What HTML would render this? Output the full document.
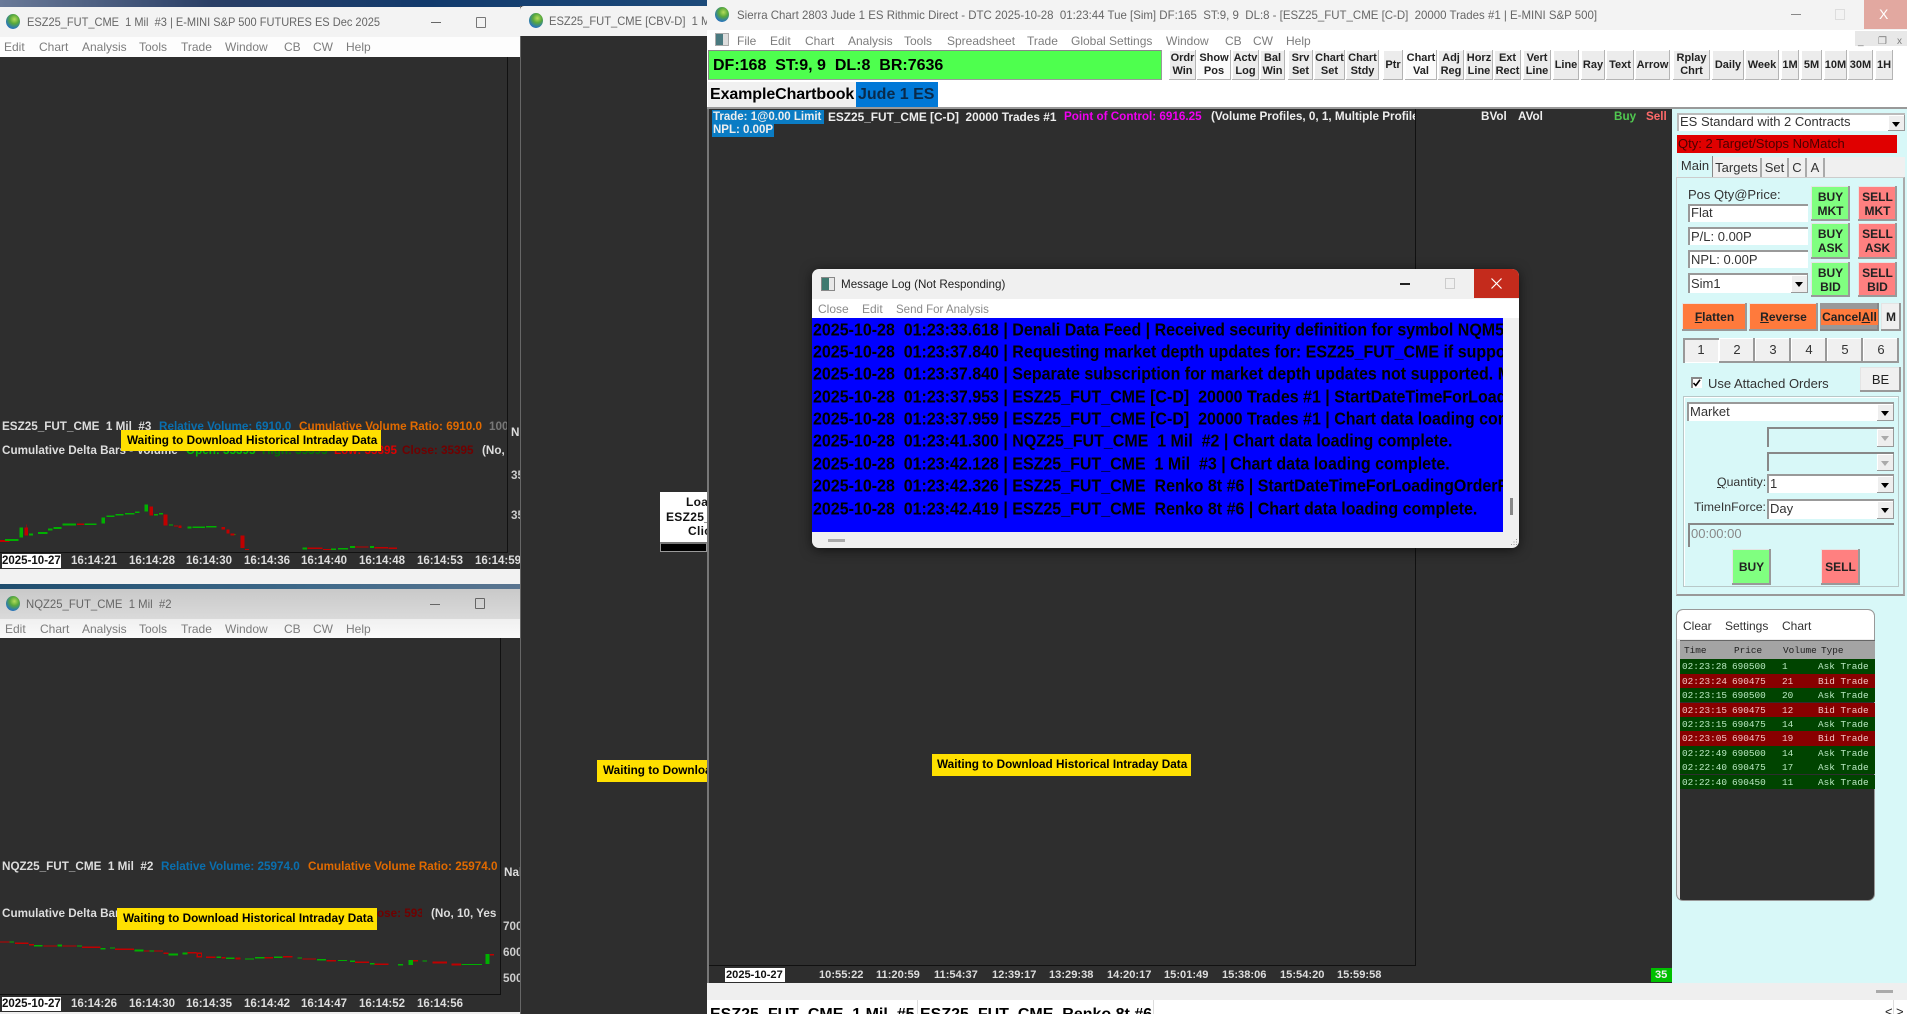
<!DOCTYPE html>
<html><head><meta charset="utf-8"><title>Sierra Chart</title>
<style>
html,body{margin:0;padding:0;width:1907px;height:1014px;overflow:hidden;background:#2e2e2e}
*{box-sizing:border-box}
body{font-family:"Liberation Sans",sans-serif;position:relative}
.a{position:absolute;white-space:pre}
.r{position:absolute}
.t{position:absolute;white-space:pre;line-height:14px;height:14px}
.m{font-size:12px;color:#7c7c7c}
.tt{font-size:12px;color:#666;transform-origin:left center}
.b{font-weight:bold;font-size:11.7px;color:#e8e8e8}
.y{font-weight:bold;font-size:11.75px;color:#000}
.tm{position:absolute;white-space:pre;font-weight:bold;font-size:11.5px;color:#ddd;line-height:14px}
.tm.n{font-size:11.1px}
.glob{position:absolute;width:14px;height:15px;border-radius:50%;background:radial-gradient(circle at 60% 35%,#b4dc5a 0,#58a83c 35%,#2a78b8 70%,#1a4a90 100%)}
.btn{position:absolute;top:50px;height:30px;background:#ececec;box-shadow:inset -1px -1px #b4b4b4,inset 1px 1px #fff;font-weight:bold;font-size:11px;line-height:13px;text-align:center;color:#222;display:flex;align-items:center;justify-content:center;white-space:pre}
.btn.on{background:#fbfbfb}
.log{position:absolute;left:813px;white-space:pre;font-weight:bold;font-size:16px;line-height:20px;color:#000;transform:scaleY(1.08)}
.p{position:absolute;white-space:pre;font-size:13px;line-height:15px;color:#333}
.in{position:absolute;background:#fff;border-top:2px solid #999;border-left:2px solid #999;font-size:13px;line-height:15px;color:#333;padding-left:1px;white-space:pre}
.dd{position:absolute;right:0;top:0;bottom:0;width:17px;background:#eee;box-shadow:inset -1px -1px #999,inset 1px 1px #fff}
.dd:after{content:"";position:absolute;left:4px;top:7px;border:4px solid transparent;border-top:5px solid #000;border-bottom:0}
.dd.off:after{border-top-color:#aaa}
.ob{position:absolute;box-shadow:inset -2px -2px #999,inset 1px 1px #e4e4e4;font-weight:bold;font-size:12px;line-height:14px;text-align:center;color:#222;display:flex;align-items:center;justify-content:center;white-space:pre}
.gb{background:#80ff80}.rb{background:#ff8080}.or{background:#ff7a3c}
.nb{position:absolute;top:338px;width:36px;height:25px;background:#f0f0f0;box-shadow:inset -2px -2px #999,inset 1px 1px #fff;text-align:center;font-size:13px;line-height:23px;color:#333}
.tab{position:absolute;top:158px;height:19px;font-size:13px;line-height:19px;text-align:center;color:#333;border-right:2px solid #aaa;background:#f0f0f0}
.row{position:absolute;left:1680px;width:195px;height:14.4px;font-family:"Liberation Mono",monospace;font-size:9.4px;line-height:15px;white-space:pre}
.row span{position:absolute;top:0}
.g{background:#004400;color:#b8e8c0}.d{background:#880000;color:#f4c0c0}
.s1{left:2px}.s2{left:52px}.s3{left:102px}.s4{left:138px}
</style></head><body>

<!-- wallpaper -->
<div class="r" style="left:0;top:0;width:708px;height:8px;background:linear-gradient(90deg,#6a7a98 0,#2a3f66 30%,#123a6c 60%,#1c4a7a 100%)"></div>

<!-- Left window 1 -->
<div class="r" style="left:0;top:7px;width:520px;height:30px;background:#f3f3f3"></div>
<div class="glob" style="left:6px;top:14px"></div>
<div class="t tt" style="left:27px;top:15px;transform:scaleX(.92)">ESZ25_FUT_CME  1 Mil  #3 | E-MINI S&amp;P 500 FUTURES ES Dec 2025</div>
<div class="r" style="left:431px;top:22px;width:10px;height:1px;background:#666"></div>
<div class="r" style="left:476px;top:17px;width:10px;height:11px;border:1px solid #777;border-radius:1px"></div>
<div class="r" style="left:0;top:37px;width:520px;height:20px;background:#fdfdfd"></div>
<div class="t m" style="left:4px;top:40px">Edit</div><div class="t m" style="left:39px;top:40px">Chart</div><div class="t m" style="left:82px;top:40px">Analysis</div><div class="t m" style="left:139px;top:40px">Tools</div><div class="t m" style="left:181px;top:40px">Trade</div><div class="t m" style="left:225px;top:40px">Window</div><div class="t m" style="left:284px;top:40px">CB</div><div class="t m" style="left:313px;top:40px">CW</div><div class="t m" style="left:346px;top:40px">Help</div>
<div class="r" style="left:0;top:57px;width:520px;height:512px;background:#2e2e2e"></div>
<div class="r" style="left:507px;top:57px;width:1px;height:495px;background:#111"></div>
<div class="r" style="left:0;top:552px;width:508px;height:1px;background:#111"></div>
<div class="t b" style="left:2px;top:420px;color:#ddd">ESZ25_FUT_CME  1 Mil  #3</div>
<div class="t b" style="left:159px;top:420px;color:#0a6fae">Relative Volume: 6910.0</div>
<div class="t b" style="left:299px;top:420px;color:#e06a00">Cumulative Volume Ratio: 6910.0</div>
<div class="t b" style="left:489px;top:420px;color:#777;width:18px;overflow:hidden">100</div>
<div class="t b" style="left:2px;top:444px;color:#ddd">Cumulative Delta Bars - Volume</div>
<div class="t b" style="left:186px;top:444px;color:#00c000">Open: 35395</div>
<div class="t b" style="left:262px;top:444px;color:#007a00">High: 35395</div>
<div class="t b" style="left:334px;top:444px;color:#e00000">Low: 35395</div>
<div class="t b" style="left:402px;top:444px;color:#700000">Close: 35395</div>
<div class="t b" style="left:482px;top:444px;color:#ddd;width:25px;overflow:hidden">(No,</div>
<div class="t b" style="left:511px;top:426px;color:#ddd;width:9px;overflow:hidden">N</div>
<div class="t b" style="left:511px;top:469px;color:#ccc;width:9px;overflow:hidden">35</div>
<div class="t b" style="left:511px;top:509px;color:#ccc;width:9px;overflow:hidden">35</div>

<svg class="r" style="left:0;top:0" width="520" height="1014" shape-rendering="crispEdges">
<g transform="translate(0,410) scale(.338,.3333)">
<g fill="#00b000">
<rect x="0" y="390" width="28" height="6" fill="#c00000"/><rect x="15" y="387" width="40" height="6"/><rect x="57" y="352" width="11" height="30"/><rect x="86" y="370" width="12" height="7"/><rect x="113" y="366" width="28" height="6"/><rect x="142" y="355" width="14" height="7"/><rect x="158" y="351" width="24" height="6"/><rect x="185" y="340" width="40" height="6"/><rect x="228" y="340" width="20" height="5" fill="#c00000"/><rect x="250" y="340" width="36" height="5"/><rect x="300" y="322" width="11" height="18"/><rect x="315" y="316" width="24" height="5"/><rect x="342" y="312" width="24" height="5"/><rect x="370" y="309" width="28" height="5"/><rect x="400" y="304" width="12" height="5"/><rect x="427" y="284" width="11" height="20"/><rect x="456" y="312" width="12" height="5"/><rect x="470" y="309" width="12" height="5"/><rect x="500" y="343" width="12" height="4"/><rect x="555" y="350" width="12" height="5"/><rect x="570" y="350" width="36" height="4"/><rect x="610" y="348" width="30" height="4"/><rect x="685" y="372" width="12" height="3"/><rect x="895" y="412" width="14" height="7"/><rect x="980" y="415" width="14" height="5"/><rect x="1000" y="414" width="30" height="4"/><rect x="1036" y="408" width="14" height="6"/><rect x="1094" y="408" width="12" height="6"/>
</g>
<g fill="#c00000">
<rect x="72" y="352" width="11" height="24"/><rect x="77" y="344" width="2" height="8"/><rect x="442" y="289" width="11" height="27"/><rect x="484" y="313" width="12" height="34"/><rect x="515" y="346" width="12" height="3"/><rect x="528" y="347" width="9" height="7"/><rect x="655" y="351" width="11" height="8"/><rect x="670" y="358" width="9" height="12"/><rect x="682" y="370" width="12" height="6"/><rect x="711" y="376" width="12" height="38"/><rect x="725" y="417" width="12" height="3"/><rect x="910" y="413" width="44" height="4"/><rect x="955" y="417" width="24" height="3"/><rect x="1050" y="409" width="40" height="4"/><rect x="1108" y="411" width="40" height="4"/><rect x="1150" y="413" width="24" height="4"/>
</g>
</g>
<g transform="translate(0,840) scale(.338,.3333)">
<g fill="#c00000">
<rect x="0" y="304" width="28" height="4"/><rect x="45" y="308" width="40" height="4"/><rect x="86" y="312" width="14" height="5"/><rect x="128" y="316" width="40" height="4"/><rect x="185" y="316" width="42" height="4"/><rect x="242" y="320" width="55" height="4"/><rect x="340" y="326" width="56" height="4"/><rect x="426" y="331" width="56" height="4"/><rect x="484" y="338" width="14" height="4"/><rect x="555" y="336" width="26" height="4"/><rect x="584" y="340" width="12" height="10" fill="none" stroke="#c00000" stroke-width="4"/><rect x="610" y="350" width="28" height="4"/><rect x="655" y="351" width="12" height="5"/><rect x="697" y="353" width="14" height="5"/><rect x="782" y="351" width="26" height="5"/><rect x="838" y="348" width="28" height="5"/><rect x="895" y="355" width="40" height="4"/><rect x="966" y="360" width="28" height="5"/><rect x="1050" y="365" width="42" height="4"/><rect x="1108" y="371" width="42" height="4"/><rect x="1222" y="360" width="14" height="5"/><rect x="1280" y="365" width="42" height="5"/><rect x="1336" y="371" width="28" height="5"/><rect x="1450" y="342" width="12" height="5"/>
</g>
<g fill="#00b000">
<rect x="28" y="304" width="14" height="4"/><rect x="100" y="315" width="26" height="5"/><rect x="170" y="314" width="14" height="5"/><rect x="228" y="316" width="14" height="4"/><rect x="298" y="324" width="14" height="5"/><rect x="326" y="322" width="14" height="4"/><rect x="398" y="329" width="26" height="5"/><rect x="442" y="331" width="14" height="4"/><rect x="498" y="341" width="28" height="5"/><rect x="540" y="337" width="14" height="7"/><rect x="640" y="350" width="14" height="4"/><rect x="668" y="353" width="26" height="4"/><rect x="725" y="355" width="26" height="4"/><rect x="754" y="351" width="28" height="4"/><rect x="810" y="349" width="26" height="5"/><rect x="880" y="352" width="14" height="4"/><rect x="938" y="357" width="26" height="4"/><rect x="1000" y="360" width="26" height="3"/><rect x="1036" y="362" width="14" height="4"/><rect x="1094" y="369" width="14" height="4"/><rect x="1178" y="372" width="14" height="5"/><rect x="1208" y="360" width="14" height="15"/><rect x="1250" y="362" width="14" height="3"/><rect x="1366" y="372" width="60" height="3"/><rect x="1436" y="342" width="12" height="30"/>
</g>
</g>
</svg>

<div class="r" style="left:121px;top:430px;width:260px;height:21px;background:#ffe000"></div>
<div class="t y" style="left:127px;top:434px">Waiting to Download Historical Intraday Data</div>
<div class="r" style="left:2px;top:554px;width:59px;height:14px;background:#fff"></div>
<div class="tm" style="left:2px;top:554px;color:#111">2025-10-27</div>
<div class="tm" style="left:71px;top:554px">16:14:21</div><div class="tm" style="left:129px;top:554px">16:14:28</div><div class="tm" style="left:186px;top:554px">16:14:30</div><div class="tm" style="left:244px;top:554px">16:14:36</div><div class="tm" style="left:301px;top:554px">16:14:40</div><div class="tm" style="left:359px;top:554px">16:14:48</div><div class="tm" style="left:417px;top:554px">16:14:53</div><div class="tm" style="left:475px;top:554px">16:14:59</div>

<!-- strip between windows -->
<div class="r" style="left:0;top:569px;width:520px;height:15px;background:#f2f2f2"></div>
<div class="r" style="left:0;top:584px;width:520px;height:5px;background:linear-gradient(90deg,#1f4d6e,#3f6a8a 60%,#5a7590)"></div>

<!-- Left window 3 -->
<div class="r" style="left:0;top:589px;width:520px;height:30px;background:linear-gradient(#c9c9c9,#dadada)"></div>
<div class="glob" style="left:6px;top:596px"></div>
<div class="t tt" style="left:26px;top:597px;color:#666;transform:scaleX(.945)">NQZ25_FUT_CME  1 Mil  #2</div>
<div class="r" style="left:430px;top:604px;width:10px;height:1px;background:#666"></div>
<div class="r" style="left:475px;top:598px;width:10px;height:11px;border:1px solid #666;border-radius:1px"></div>
<div class="r" style="left:0;top:619px;width:520px;height:19px;background:linear-gradient(#f0f0f0,#fafafa)"></div>
<div class="t m" style="left:5px;top:622px">Edit</div><div class="t m" style="left:40px;top:622px">Chart</div><div class="t m" style="left:82px;top:622px">Analysis</div><div class="t m" style="left:139px;top:622px">Tools</div><div class="t m" style="left:181px;top:622px">Trade</div><div class="t m" style="left:225px;top:622px">Window</div><div class="t m" style="left:284px;top:622px">CB</div><div class="t m" style="left:313px;top:622px">CW</div><div class="t m" style="left:346px;top:622px">Help</div>
<div class="r" style="left:500px;top:638px;width:1px;height:356px;background:#111"></div>
<div class="r" style="left:0;top:994px;width:501px;height:1px;background:#111"></div>
<div class="t b" style="left:2px;top:860px;color:#ddd">NQZ25_FUT_CME  1 Mil  #2</div>
<div class="t b" style="left:161px;top:860px;color:#0a6fae">Relative Volume: 25974.0</div>
<div class="t b" style="left:308px;top:860px;color:#e06a00">Cumulative Volume Ratio: 25974.0</div>
<div class="t b" style="left:504px;top:866px;color:#ddd;width:16px;overflow:hidden">Nal</div>
<div class="t b" style="left:2px;top:907px;color:#ddd">Cumulative Delta Bars</div>
<div class="t b" style="left:377px;top:907px;color:#700000;width:45px;overflow:hidden">ose: 593</div>
<div class="t b" style="left:431px;top:907px;color:#ddd;width:68px;overflow:hidden">(No, 10, Yes</div>
<div class="t b" style="left:503px;top:920px;color:#ccc;width:17px;overflow:hidden">700</div>
<div class="t b" style="left:503px;top:946px;color:#ccc;width:17px;overflow:hidden">600</div>
<div class="t b" style="left:503px;top:972px;color:#ccc;width:17px;overflow:hidden">500</div>
<div class="r" style="left:117px;top:908px;width:260px;height:22px;background:#ffe000"></div>
<div class="t y" style="left:123px;top:912px">Waiting to Download Historical Intraday Data</div>
<div class="r" style="left:2px;top:997px;width:59px;height:14px;background:#fff"></div>
<div class="tm" style="left:2px;top:997px;color:#111">2025-10-27</div>
<div class="tm" style="left:71px;top:997px">16:14:26</div><div class="tm" style="left:129px;top:997px">16:14:30</div><div class="tm" style="left:186px;top:997px">16:14:35</div><div class="tm" style="left:244px;top:997px">16:14:42</div><div class="tm" style="left:301px;top:997px">16:14:47</div><div class="tm" style="left:359px;top:997px">16:14:52</div><div class="tm" style="left:417px;top:997px">16:14:56</div>
<div class="r" style="left:0;top:1012px;width:520px;height:2px;background:#eee"></div>

<!-- Middle window -->
<div class="r" style="left:520px;top:6px;width:188px;height:1008px;background:#2e2e2e;border-left:1px solid #666"></div>
<div class="r" style="left:520px;top:6px;width:188px;height:30px;background:#f3f3f3;border-radius:4px 0 0 0"></div>
<div class="glob" style="left:529px;top:13px"></div>
<div class="r" style="left:549px;top:14px;width:159px;height:14px;overflow:hidden"><div class="t tt" style="left:0;top:0;transform:scaleX(.93)">ESZ25_FUT_CME [CBV-D]  1 Mil</div></div>
<div class="r" style="left:660px;top:492px;width:47px;height:50px;background:#fff"></div>
<div class="r" style="left:660px;top:542px;width:47px;height:10px;background:#000;border:1px solid #999;border-top:2px solid #777"></div>
<div class="t" style="left:660px;top:495px;width:47px;overflow:hidden;font-weight:bold;font-size:12px;color:#111;letter-spacing:.3px"><span style="position:absolute;left:26px">Loa</span></div>
<div class="t" style="left:660px;top:510px;width:47px;overflow:hidden;font-weight:bold;font-size:12px;color:#111;letter-spacing:.3px"><span style="position:absolute;left:6px">ESZ25_</span></div>
<div class="t" style="left:660px;top:524px;width:47px;overflow:hidden;font-weight:bold;font-size:12px;color:#111;letter-spacing:.3px"><span style="position:absolute;left:28px">Clic</span></div>
<div class="r" style="left:597px;top:760px;width:110px;height:22px;background:#ffe000;overflow:hidden"></div>
<div class="t y" style="left:603px;top:764px;width:104px;overflow:hidden">Waiting to Download Historical</div>

<!-- Main window -->
<div class="r" style="left:707px;top:0;width:1200px;height:30px;background:#f3f3f3"></div>
<div class="glob" style="left:715px;top:7px"></div>
<div class="t tt" style="left:737px;top:8px;color:#666;transform:scaleX(.955)">Sierra Chart 2803 Jude 1 ES Rithmic Direct - DTC 2025-10-28  01:23:44 Tue [Sim] DF:165  ST:9, 9  DL:8 - [ESZ25_FUT_CME [C-D]  20000 Trades #1 | E-MINI S&amp;P 500]</div>
<div class="r" style="left:1791px;top:14px;width:10px;height:1px;background:#888"></div>
<div class="r" style="left:1835px;top:9px;width:10px;height:11px;border:1px solid #ddd"></div>
<div class="r" style="left:1864px;top:0;width:43px;height:29px;background:#e2a8a0"></div>
<div class="t" style="left:1879px;top:7px;color:#fff;font-size:14px">X</div>
<div class="r" style="left:707px;top:30px;width:1200px;height:20px;background:#fff"></div>
<div class="r" style="left:715px;top:33px;width:14px;height:13px;background:linear-gradient(90deg,#4a7a80 60%,#ddd 60%);border:1px solid #aaa"></div>
<div class="t m" style="left:737px;top:34px">File</div><div class="t m" style="left:770px;top:34px">Edit</div><div class="t m" style="left:805px;top:34px">Chart</div><div class="t m" style="left:848px;top:34px">Analysis</div><div class="t m" style="left:904px;top:34px">Tools</div><div class="t m" style="left:947px;top:34px">Spreadsheet</div><div class="t m" style="left:1027px;top:34px">Trade</div><div class="t m" style="left:1071px;top:34px">Global Settings</div><div class="t m" style="left:1166px;top:34px">Window</div><div class="t m" style="left:1225px;top:34px">CB</div><div class="t m" style="left:1253px;top:34px">CW</div><div class="t m" style="left:1286px;top:34px">Help</div>
<div class="r" style="left:1855px;top:31px;width:52px;height:15px;background:#e8e8e8"></div>
<div class="t m" style="left:1858px;top:35px;font-size:10px">_</div><div class="t m" style="left:1878px;top:35px;font-size:10px">&#10064;</div><div class="t m" style="left:1897px;top:35px;font-size:10px">x</div>

<div class="r" style="left:707px;top:49px;width:1200px;height:33px;background:#fff"></div>
<div class="r" style="left:708px;top:50px;width:454px;height:30px;background:#4eff4e;box-shadow:inset -1px -1px #999,inset 1px 1px #888"></div>
<div class="t" style="left:713px;top:58px;font-weight:bold;font-size:16px;line-height:16px;height:16px;color:#000">DF:168  ST:9, 9  DL:8  BR:7636</div>

<div class="btn" style="left:1169px;width:27px">Ordr
Win</div>
<div class="btn on" style="left:1197px;width:34px">Show
Pos</div>
<div class="btn" style="left:1232px;width:27px">Actv
Log</div>
<div class="btn" style="left:1260px;width:25px">Bal
Win</div>
<div class="btn" style="left:1288px;width:25px">Srv
Set</div>
<div class="btn" style="left:1314px;width:31px">Chart
Set</div>
<div class="btn" style="left:1346px;width:33px">Chart
Stdy</div>
<div class="btn" style="left:1383px;width:20px">Ptr</div>
<div class="btn on" style="left:1405px;width:32px">Chart
Val</div>
<div class="btn" style="left:1438px;width:26px">Adj
Reg</div>
<div class="btn" style="left:1465px;width:28px">Horz
Line</div>
<div class="btn" style="left:1494px;width:27px">Ext
Rect</div>
<div class="btn" style="left:1523px;width:28px">Vert
Line</div>
<div class="btn" style="left:1553px;width:26px">Line</div>
<div class="btn" style="left:1581px;width:24px">Ray</div>
<div class="btn" style="left:1606px;width:28px">Text</div>
<div class="btn" style="left:1635px;width:35px">Arrow</div>
<div class="btn" style="left:1673px;width:37px">Rplay
Chrt</div>
<div class="btn" style="left:1712px;width:32px">Daily</div>
<div class="btn" style="left:1745px;width:34px">Week</div>
<div class="btn" style="left:1781px;width:18px">1M</div>
<div class="btn" style="left:1801px;width:21px">5M</div>
<div class="btn" style="left:1824px;width:23px">10M</div>
<div class="btn" style="left:1848px;width:25px">30M</div>
<div class="btn" style="left:1875px;width:18px">1H</div>

<div class="r" style="left:707px;top:82px;width:1200px;height:25px;background:#fff"></div>
<div class="r" style="left:708px;top:82px;width:148px;height:25px;background:#f0f0f0"></div>
<div class="t" style="left:710px;top:86px;font-weight:bold;font-size:16px;line-height:17px;height:17px;color:#000;letter-spacing:-.1px">ExampleChartbook</div>
<div class="r" style="left:856px;top:82px;width:82px;height:25px;background:#0078d7"></div>
<div class="t" style="left:858px;top:86px;font-weight:bold;font-size:16px;line-height:17px;height:17px;color:#0a2a4a">Jude 1 ES</div>
<div class="r" style="left:707px;top:107px;width:1200px;height:2px;background:#999"></div>

<!-- main chart -->
<div class="r" style="left:707px;top:109px;width:965px;height:874px;background:#2e2e2e;border-left:2px solid #777"></div>
<div class="r" style="left:1415px;top:109px;width:1px;height:857px;background:#111"></div>
<div class="r" style="left:709px;top:965px;width:707px;height:1px;background:#111"></div>
<div class="r" style="left:712px;top:110px;width:112px;height:14px;background:#0a7cc4"></div>
<div class="r" style="left:712px;top:123px;width:62px;height:14px;background:#0a7cc4"></div>
<div class="t b" style="left:713px;top:110px;color:#eee;font-size:11.5px">Trade: 1@0.00 Limit</div>
<div class="t b" style="left:713px;top:123px;color:#eee;font-size:11.5px">NPL: 0.00P</div>
<div class="t b" style="left:828px;top:110px;color:#eee;font-size:11.85px">ESZ25_FUT_CME [C-D]  20000 Trades #1</div>
<div class="t b" style="left:1064px;top:110px;color:#f000f0">Point of Control: 6916.25</div>
<div class="t b" style="left:1211px;top:110px;color:#eee;width:204px;overflow:hidden">(Volume Profiles, 0, 1, Multiple Profiles</div>
<div class="t b" style="left:1481px;top:110px;color:#eee">BVol</div>
<div class="t b" style="left:1518px;top:110px;color:#eee">AVol</div>
<div class="t b" style="left:1614px;top:110px;color:#50c850">Buy</div>
<div class="t b" style="left:1646px;top:110px;color:#ff6a6a">Sell</div>

<div class="r" style="left:932px;top:754px;width:259px;height:22px;background:#ffe000"></div>
<div class="t y" style="left:937px;top:758px">Waiting to Download Historical Intraday Data</div>

<div class="r" style="left:725px;top:968px;width:60px;height:14px;background:#fff"></div>
<div class="tm n" style="left:726px;top:968px;color:#111">2025-10-27</div>
<div class="tm n" style="left:819px;top:968px">10:55:22</div><div class="tm n" style="left:876px;top:968px">11:20:59</div><div class="tm n" style="left:934px;top:968px">11:54:37</div><div class="tm n" style="left:992px;top:968px">12:39:17</div><div class="tm n" style="left:1049px;top:968px">13:29:38</div><div class="tm n" style="left:1107px;top:968px">14:20:17</div><div class="tm n" style="left:1164px;top:968px">15:01:49</div><div class="tm n" style="left:1222px;top:968px">15:38:06</div><div class="tm n" style="left:1280px;top:968px">15:54:20</div><div class="tm n" style="left:1337px;top:968px">15:59:58</div>
<div class="r" style="left:1651px;top:968px;width:21px;height:14px;background:#00c000"></div>
<div class="tm n" style="left:1655px;top:968px;color:#eee">35</div>

<!-- bottom bars -->
<div class="r" style="left:707px;top:983px;width:1200px;height:17px;background:#efefef"></div>
<div class="r" style="left:1876px;top:990px;width:17px;height:3px;background:#aaa"></div>
<div class="r" style="left:707px;top:1000px;width:1200px;height:14px;background:#fff"></div>
<div class="r" style="left:917px;top:1000px;width:1px;height:14px;background:#ddd"></div>
<div class="r" style="left:1153px;top:1000px;width:1px;height:14px;background:#ddd"></div>
<div class="r" style="left:1893px;top:1000px;width:1px;height:14px;background:#ddd"></div>
<div class="t" style="left:710px;top:1006px;font-weight:bold;font-size:16px;line-height:17px;height:17px;color:#000">ESZ25_FUT_CME  1 Mil  #5</div>
<div class="t" style="left:920px;top:1006px;font-weight:bold;font-size:16px;line-height:17px;height:17px;color:#000">ESZ25_FUT_CME  Renko 8t #6</div>
<div class="t" style="left:1885px;top:1005px;font-size:13px;color:#222">&lt;</div>
<div class="t" style="left:1896px;top:1005px;font-size:13px;color:#222">&gt;</div>

<!-- Right panel -->
<div class="r" style="left:1672px;top:109px;width:235px;height:874px;background:#d8f8f8"></div>
<div class="in" style="left:1677px;top:113px;width:228px;height:18px;border-color:#bbb;line-height:14px">ES Standard with 2 Contracts<div class="dd"></div></div>
<div class="r" style="left:1677px;top:135px;width:220px;height:18px;background:#e00000;font-size:13px;line-height:18px;color:#4a0000;padding-left:1px;white-space:pre">Qty: 2 Target/Stops NoMatch</div>
<div class="r" style="left:1677px;top:157px;width:228px;height:20px;background:#f0f0f0"></div>
<div class="r" style="left:1676px;top:177px;width:229px;height:419px;background:#d8f8f8;border-style:solid;border-width:1px 2px 2px 1px;border-color:#ccc #aaa #999 #ccc"></div>
<div class="tab" style="left:1678px;width:35px;height:21px;top:156px;background:#d8f8f8;border-right:1px solid #888">Main</div>
<div class="tab" style="left:1713px;width:49px">Targets</div>
<div class="tab" style="left:1762px;width:27px">Set</div>
<div class="tab" style="left:1789px;width:18px">C</div>
<div class="tab" style="left:1807px;width:18px">A</div>

<div class="p" style="left:1688px;top:187px">Pos Qty@Price:</div>
<div class="in" style="left:1688px;top:204px;width:120px;height:18px;line-height:14px">Flat</div>
<div class="in" style="left:1688px;top:227px;width:120px;height:18px">P/L: 0.00P</div>
<div class="in" style="left:1688px;top:250px;width:120px;height:18px">NPL: 0.00P</div>
<div class="in" style="left:1688px;top:273px;width:120px;height:20px;line-height:17px">Sim1<div class="dd"></div></div>
<div class="ob gb" style="left:1811px;top:186px;width:39px;height:35px">BUY
MKT</div>
<div class="ob rb" style="left:1858px;top:186px;width:39px;height:35px">SELL
MKT</div>
<div class="ob gb" style="left:1811px;top:223px;width:39px;height:36px">BUY
ASK</div>
<div class="ob rb" style="left:1858px;top:223px;width:39px;height:36px">SELL
ASK</div>
<div class="ob gb" style="left:1811px;top:262px;width:39px;height:35px">BUY
BID</div>
<div class="ob rb" style="left:1858px;top:262px;width:39px;height:35px">SELL
BID</div>
<div class="ob or" style="left:1682px;top:303px;width:65px;height:28px"><span><u>F</u>latten</span></div>
<div class="ob or" style="left:1749px;top:303px;width:69px;height:28px"><span><u>R</u>everse</span></div>
<div class="ob" style="left:1820px;top:303px;width:59px;height:28px;background:#999;box-shadow:inset -2px -2px #888"><span style="background:#ff7a3c;padding:1px 1px">Cancel<u>A</u>ll</span></div>
<div class="ob" style="left:1881px;top:303px;width:20px;height:28px;background:#f0f0f0">M</div>
<div class="nb" style="left:1683px;box-shadow:inset 2px 2px #999,inset -1px -1px #fff">1</div>
<div class="nb" style="left:1719px">2</div><div class="nb" style="left:1755px">3</div><div class="nb" style="left:1791px">4</div><div class="nb" style="left:1827px">5</div><div class="nb" style="left:1863px">6</div>
<div class="r" style="left:1691px;top:377px;width:11px;height:11px;background:#fff;border-left:2px solid #888;border-top:2px solid #888"></div>
<svg class="r" style="left:1692px;top:378px" width="10" height="10"><path d="M1.5 5 L3.8 7.5 L8 1.8" fill="none" stroke="#000" stroke-width="1.6"/></svg>
<div class="p" style="left:1708px;top:376px">Use Attached Orders</div>
<div class="ob" style="left:1860px;top:367px;width:41px;height:25px;background:#f0f0f0;font-weight:normal;font-size:13px">BE</div>

<div class="r" style="left:1683px;top:396px;width:216px;height:191px;border:1px solid #b8c8c8;box-shadow:inset 1px 1px #fff"></div>
<div class="in" style="left:1687px;top:402px;width:207px;height:19px">Market<div class="dd"></div></div>
<div class="in" style="left:1767px;top:427px;width:127px;height:20px;background:#d8f8f8;border-color:#888"><div class="dd off"></div></div>
<div class="in" style="left:1767px;top:452px;width:127px;height:19px;background:#d8f8f8;border-color:#888"><div class="dd off"></div></div>
<div class="p" style="left:1717px;top:475px;font-size:12.3px"><u>Q</u>uantity:</div>
<div class="in" style="left:1767px;top:474px;width:127px;height:19px">1<div class="dd"></div></div>
<div class="p" style="left:1694px;top:500px;font-size:12.3px">TimeInForce:</div>
<div class="in" style="left:1767px;top:499px;width:127px;height:20px">Day<div class="dd"></div></div>
<div class="in" style="left:1688px;top:523px;width:206px;height:24px;background:#d8f8f8;border-color:#888;color:#888;line-height:18px">00:00:00</div>
<div class="ob gb" style="left:1732px;top:549px;width:39px;height:36px">BUY</div>
<div class="ob rb" style="left:1821px;top:549px;width:39px;height:36px">SELL</div>

<!-- Time and sales -->
<div class="r" style="left:1676px;top:609px;width:199px;height:292px;background:#2e2e2e;border-radius:7px;border:1px solid #999;overflow:hidden">
<div class="r" style="left:0;top:0;width:199px;height:29px;background:#fff"></div>
<div class="r" style="left:0;top:29px;width:199px;height:2px;background:#eee"></div>
<div class="r" style="left:0;top:31px;width:3px;height:270px;background:#e8e8e8"></div>
</div>
<div class="t" style="left:1683px;top:619px;font-size:12px;color:#333">Clear</div>
<div class="t" style="left:1725px;top:619px;font-size:12px;color:#333">Settings</div>
<div class="t" style="left:1782px;top:619px;font-size:12px;color:#333">Chart</div>
<div class="r" style="left:1680px;top:640px;width:195px;height:19px;background:#a4a4a4;border-top:1px solid #666"></div>
<div class="row" style="top:643px;color:#222"><span style="left:4px">Time</span><span style="left:54px">Price</span><span style="left:103px">Volume</span><span style="left:141px">Type</span></div>
<div class="row g" style="top:659.3px"><span class="s1">02:23:28</span><span class="s2">690500</span><span class="s3">1</span><span class="s4">Ask Trade</span></div>
<div class="row d" style="top:673.7px"><span class="s1">02:23:24</span><span class="s2">690475</span><span class="s3">21</span><span class="s4">Bid Trade</span></div>
<div class="row g" style="top:688.1px"><span class="s1">02:23:15</span><span class="s2">690500</span><span class="s3">20</span><span class="s4">Ask Trade</span></div>
<div class="row d" style="top:702.5px"><span class="s1">02:23:15</span><span class="s2">690475</span><span class="s3">12</span><span class="s4">Bid Trade</span></div>
<div class="row g" style="top:716.9px"><span class="s1">02:23:15</span><span class="s2">690475</span><span class="s3">14</span><span class="s4">Ask Trade</span></div>
<div class="row d" style="top:731.3px"><span class="s1">02:23:05</span><span class="s2">690475</span><span class="s3">19</span><span class="s4">Bid Trade</span></div>
<div class="row g" style="top:745.7px"><span class="s1">02:22:49</span><span class="s2">690500</span><span class="s3">14</span><span class="s4">Ask Trade</span></div>
<div class="row g" style="top:760.1px"><span class="s1">02:22:40</span><span class="s2">690475</span><span class="s3">17</span><span class="s4">Ask Trade</span></div>
<div class="row g" style="top:774.5px"><span class="s1">02:22:40</span><span class="s2">690450</span><span class="s3">11</span><span class="s4">Ask Trade</span></div>

<!-- Message log -->
<div class="r" style="left:812px;top:269px;width:707px;height:279px;background:#f0f0f0;border-radius:7px;box-shadow:0 2px 12px rgba(0,0,0,.6);overflow:hidden">
<div class="r" style="left:0;top:30px;width:707px;height:19px;background:#fff"></div>
<div class="r" style="left:0;top:49px;width:691px;height:214px;background:#0000ff"></div>
<div class="r" style="left:662px;top:0;width:45px;height:29px;background:#c42b1c"></div>
</div>
<div class="r" style="left:821px;top:277px;width:14px;height:14px;background:linear-gradient(90deg,#3f7a70 60%,#e8e8e8 60%);border:1px solid #888"></div>
<div class="t" style="left:841px;top:277px;font-size:12px;color:#222;transform:scaleX(.97);transform-origin:left center">Message Log (Not Responding)</div>
<div class="r" style="left:1400px;top:283px;width:10px;height:1.5px;background:#222"></div>
<div class="r" style="left:1445px;top:278px;width:10px;height:11px;border:1px solid #ccc"></div>
<svg class="r" style="left:1490px;top:277px" width="13" height="13"><path d="M1.5 1.5 L11.5 11.5 M11.5 1.5 L1.5 11.5" stroke="#fff" stroke-width="1.2"/></svg>
<div class="t m" style="left:818px;top:302px;color:#8a8a8a">Close</div><div class="t m" style="left:862px;top:302px;color:#8a8a8a">Edit</div><div class="t m" style="left:896px;top:302px;color:#8a8a8a;transform:scaleX(.96);transform-origin:left center">Send For Analysis</div>
<div class="r" style="left:812px;top:318px;width:691px;height:214px;overflow:hidden">
<div class="log" style="left:1px;top:3px">2025-10-28  01:23:33.618 | Denali Data Feed | Received security definition for symbol NQM5</div>
<div class="log" style="left:1px;top:25px">2025-10-28  01:23:37.840 | Requesting market depth updates for: ESZ25_FUT_CME if supported</div>
<div class="log" style="left:1px;top:47px">2025-10-28  01:23:37.840 | Separate subscription for market depth updates not supported. Market</div>
<div class="log" style="left:1px;top:70px">2025-10-28  01:23:37.953 | ESZ25_FUT_CME [C-D]  20000 Trades #1 | StartDateTimeForLoadingOrder</div>
<div class="log" style="left:1px;top:92px">2025-10-28  01:23:37.959 | ESZ25_FUT_CME [C-D]  20000 Trades #1 | Chart data loading complete.</div>
<div class="log" style="left:1px;top:114px">2025-10-28  01:23:41.300 | NQZ25_FUT_CME  1 Mil  #2 | Chart data loading complete.</div>
<div class="log" style="left:1px;top:137px">2025-10-28  01:23:42.128 | ESZ25_FUT_CME  1 Mil  #3 | Chart data loading complete.</div>
<div class="log" style="left:1px;top:159px">2025-10-28  01:23:42.326 | ESZ25_FUT_CME  Renko 8t #6 | StartDateTimeForLoadingOrderFills</div>
<div class="log" style="left:1px;top:182px">2025-10-28  01:23:42.419 | ESZ25_FUT_CME  Renko 8t #6 | Chart data loading complete.</div>
</div>
<div class="r" style="left:1510px;top:498px;width:3px;height:17px;background:#888"></div>
<div class="r" style="left:828px;top:539px;width:17px;height:3px;background:#aaa"></div>
<svg class="r" style="left:1509px;top:538px" width="9" height="9"><path d="M7 1h1v1H7zM4.500 3.500h1v1h-1zM7 3.500h1v1H7zM2 6h1v1H2zM4.500 6h1v1h-1zM7 6h1v1H7z" fill="#999"/></svg>
</body></html>
